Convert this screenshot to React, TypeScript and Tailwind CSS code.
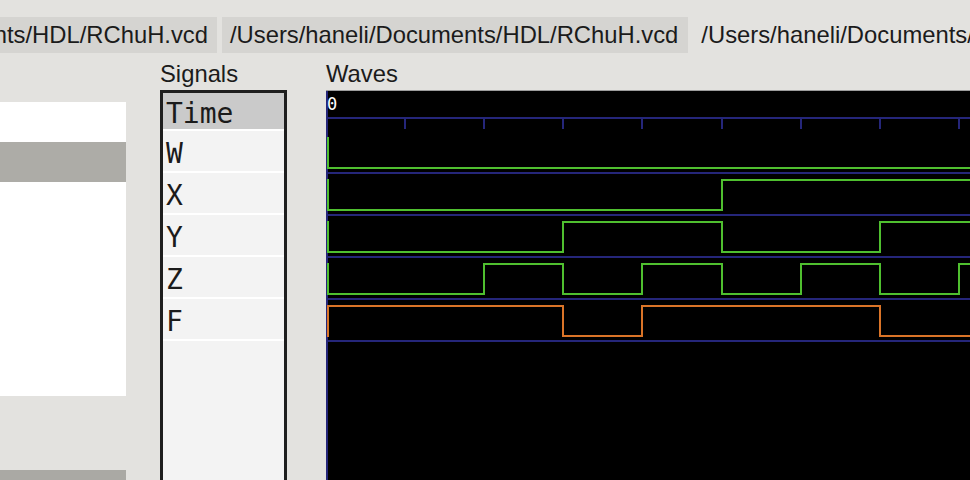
const FILE = '/Users/haneli/Documents/HDL/RChuH.vcd'

const TICK = 79.1
const GREEN = '#4fbf2f'
const ORANGE = '#da7428'
const BLUE = '#25267a'

const signals = [
  { name: 'W', init: 0, edges: [] as number[], color: GREEN },
  { name: 'X', init: 0, edges: [5], color: GREEN },
  { name: 'Y', init: 0, edges: [3, 5, 7], color: GREEN },
  { name: 'Z', init: 0, edges: [2, 3, 4, 5, 6, 7, 8], color: GREEN },
  { name: 'F', init: 1, edges: [3, 4, 7], color: ORANGE },
]

const Waves = () => {
  const width = 644
  const height = 390
  return (
    <svg width={width} height={height} className="block" shapeRendering="crispEdges">
      <rect x={0} y={0} width={2} height={height} fill={BLUE} />
      <text x={1} y={19} fill="#ffffff" fontFamily="'DejaVu Sans Mono', monospace" fontSize={17}>
        0
      </text>
      <rect x={0} y={26} width={width} height={2} fill={BLUE} />
      {Array.from({ length: 9 }).map((_, k) =>
        k === 0 ? null : (
          <rect key={k} x={Math.round(k * TICK) - 1} y={26} width={2} height={12} fill={BLUE} />
        ),
      )}
      {signals.map((s, i) => {
        const hi = 47 + 42 * i
        const lo = 77 + 42 * i
        const sep = 81 + 42 * i
        const lvl = (v: number) => (v ? hi : lo)
        let v = s.init
        let d = `M2 ${lvl(v)}`
        s.edges.forEach((e) => {
          const x = Math.round(e * TICK)
          v = v ? 0 : 1
          d += ` H${x} V${lvl(v)}`
        })
        d += ` H${width}`
        return (
          <g key={s.name}>
            <rect x={0} y={sep} width={width} height={2} fill={BLUE} />
            <rect x={1} y={hi - 1} width={2} height={lo - hi + 2} fill={s.color} />
            <path d={d} fill="none" stroke={s.color} strokeWidth={2} />
          </g>
        )
      })}
    </svg>
  )
}

export default function App() {
  return (
    <div
      className="w-[970px] h-[480px] overflow-hidden bg-[#e3e2df] text-[#1b1b1b] flex flex-col"
      style={{ fontFamily: "'Liberation Sans', Arial, sans-serif" }}
    >
      {/* tab bar, scrolled so the first tab is cut off */}
      <div className="pt-[17px] flex h-[53px] shrink-0 text-[23.8px] leading-[36px] whitespace-nowrap">
        <div className="w-[217px] shrink-0 h-[36px] bg-[#d5d4d1] flex justify-end overflow-hidden pr-[9px]">
          <span className="shrink-0">{FILE}</span>
        </div>
        <div className="ml-[5px] shrink-0 h-[36px] bg-[#d5d4d1] pl-[8px] pr-[10px]">{FILE}</div>
        <div className="h-[36px] shrink-0 pl-[13px]">{FILE}</div>
      </div>

      <div className="flex flex-1 min-h-0">
        {/* left list */}
        <div className="w-[126px] shrink-0 flex flex-col">
          <div className="mt-[49px] h-[294px] shrink-0 bg-white">
            <div className="mt-[40px] h-[40px] bg-[#adaca7]" />
          </div>
          <div className="mt-[74px] h-[20px] shrink-0 bg-[#aaa9a4]" />
        </div>

        {/* signal names */}
        <div className="ml-[34px] w-[127px] shrink-0 flex flex-col">
          <div className="pt-[7px] mb-[2px] text-[23.8px] leading-[28px]">Signals</div>
          <div
            className="flex-1 border-[3px] border-[#1e1e1e] border-b-0 bg-[#f3f3f3] text-[28px] overflow-hidden"
            style={{ fontFamily: "'DejaVu Sans Mono', monospace" }}
          >
            <div className="h-[38px] bg-[#cacaca] border-b-2 border-white pl-[3px] leading-[42px] overflow-hidden">
              Time
            </div>
            {signals.map((s) => (
              <div
                key={s.name}
                className="h-[42px] border-b-2 border-white pl-[3px] leading-[45px] overflow-hidden"
              >
                {s.name}
              </div>
            ))}
          </div>
        </div>

        {/* waves */}
        <div className="ml-[39px] flex-1 flex flex-col min-w-0">
          <div className="pt-[7px] mb-[2px] text-[23.8px] leading-[28px]">Waves</div>
          <div className="flex-1 bg-black border-t border-[#9c9c9c] overflow-hidden">
            <Waves />
          </div>
        </div>
      </div>
    </div>
  )
}
